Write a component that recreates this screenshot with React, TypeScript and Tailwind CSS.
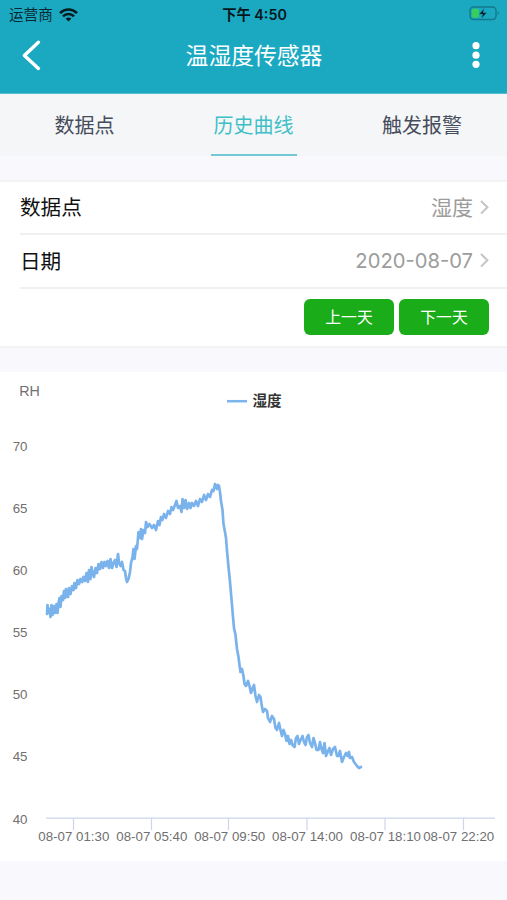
import type { ReactNode } from "react";

const CJK = "font-['Inter','Noto_Sans_CJK_SC',sans-serif]";

const yLabels = [
  { text: "70", y: 74 },
  { text: "65", y: 136 },
  { text: "60", y: 198 },
  { text: "55", y: 260 },
  { text: "50", y: 322 },
  { text: "45", y: 384 },
  { text: "40", y: 447 },
];

const xLabels = [
  { text: "08-07 01:30", x: 73.8 },
  { text: "08-07 05:40", x: 151.8 },
  { text: "08-07 09:50", x: 229.7 },
  { text: "08-07 14:00", x: 307.5 },
  { text: "08-07 18:10", x: 385.5 },
  { text: "08-07 22:20", x: 458.7 },
];

const ticks = [73.5, 151.5, 228.5, 307, 385, 463.5];

const humidity =
  "47,614 47.5,605 48.5,613 49.5,609 50.5,617 51.5,605 52.5,615 54,606 55,613 56.5,604 57.5,613 58.5,603 59.5,598 60.5,607 61.5,596 63,600 64,591 65,598 66,589 67,596 68,597 69,588 70.5,594 72,586 73.5,590 74.5,583 76,588 77.5,580 79,584 80.5,579 82,582 83.5,577 85,581 86.5,573 88,582 89,570 90.5,579 91.5,567 92.5,573 94,577 95.5,568 97,573 98.5,564 100,569 101.5,562 103,568 104.5,562 106,566 107.5,561 109,568 110.5,559 112,568 113.5,563 115,560 116.5,567 118,554 119,563 120.5,566 122,562 123.5,570 125,571 126,578 127,582 128.5,579 130,572 131,563 132.5,557 133.5,549 134.5,559 136,546 137,549 138.5,532 140,538 141,529 142,539 143.5,530 145,533 146,522 147.5,527 149.5,524 152,528 154,525 156,530 158,521 159.5,525 161,517 162.5,520 164,514 166,518 168,511 170,514 171.5,507 173,510 175,505 176.5,501 178,508 180,506 181.5,512 182.5,499 184,508 185.5,500 187,509 189,503 190.5,508 192,503 194,506 196,501 198,506 200,499 202,502 204,495 206,500 208,494 210,497 212,490 213.5,491 215,484 217,489 218,485 219,486 220,492 221,501 222.5,510 223.5,524 225,532 226,538 227,551 228.5,567 230,582 231.5,599 233,617 234,628 235.5,635 237,649 238.5,657 239.5,665 240.5,672 242,669 243.5,676 244.5,684 246,686 248,681 249.5,686 251,693 253,687 254,685 255.5,696 257,702 259,695 260.5,697 261.5,704 263,712 265,709 267,711 268,718 270,722 272,716 274,719 275.5,728 277,730 279,723 280.5,730 282,736 283.5,730 285,734 286.5,741 288,736 289.5,744 291,740 292.5,745 294.5,747 296,738 297.5,736 299,744 301,739 302.5,736 304,742 305.5,745 307,737 308.5,735 310,743 312,747 313.5,738 315,743 316.5,750 318.5,750 320,742 321.5,749 323,753 324.5,743 326,756 328,751 329.5,748 331,755 333,749 335,747 337,756 338.5,756 340,751 342,762 344,757 346,753 347.5,756 349,752 350,758 352,757 354,762 357,766 359,768 361,767";

function Chevron() {
  return (
    <svg className="h-[15px] w-[9px]" viewBox="0 0 9 15" fill="none" stroke="#c4c4c4" strokeWidth="2">
      <path d="M1 1 L7.4 7.3 L1 13.6" />
    </svg>
  );
}

function Row({ label, children }: { label: string; children: ReactNode }) {
  return (
    <div className="ml-5 flex h-[54px] items-center justify-between border-b-2 border-[#f1f1f2] pr-[18px]">
      <span className="pt-[3px] text-[20.6px] text-[#111]">{label}</span>
      <span className="flex items-center gap-[7px] text-[#9c9c9c]">
        {children}
        <Chevron />
      </span>
    </div>
  );
}

function Header() {
  return (
    <header className="h-[94px] border-b border-[#53bfce] bg-[#1ba9c2]">
      <div className="grid h-7 grid-cols-3 items-center pl-[9px] pr-[7px] text-[14.6px] leading-7 text-[#082930]">
        <div className="flex items-center gap-[6px]">
          <span className="pt-px">运营商</span>
          <svg className="h-[14px] w-[19px]" viewBox="0 0 19 14" fill="none" stroke="#061c21" strokeWidth="2.6">
            <path d="M1 5.1 C6 .2 13 .2 18 5.1" />
            <path d="M4 8.3 C7 5.2 12 5.2 15 8.3" />
            <path d="M6.6 10.6 Q9.5 8.2 12.4 10.6 L9.5 13.5 Z" fill="#061c21" stroke="none" />
          </svg>
        </div>
        <div className="whitespace-nowrap text-center text-[14.3px] font-semibold text-[#06181c]">下午 4:50</div>
        <div className="flex justify-end">
          <svg className="-mt-[2px] h-[15px] w-[31px]" viewBox="0 0 31 15" fill="none">
            <rect x="1" y="1" width="26" height="12.5" rx="3.5" stroke="#137a8c" strokeWidth="1.4" />
            <path d="M28.7 5 Q31 7.2 28.7 9.4 Z" fill="#137a8c" />
            <rect x="2.8" y="2.8" width="7.2" height="9" rx="1.8" fill="#35cf59" />
            <path d="M15.5 2 L9.8 8.2 H13.5 L12.2 12.8 L18 6.4 H14.2 Z" fill="#04191d" stroke="#1ba9c2" strokeWidth=".6" />
          </svg>
        </div>
      </div>
      <div className="flex h-[54px] items-center justify-between pl-[22px] pr-[27px]">
        <svg className="h-[31px] w-5" viewBox="0 0 20 31" fill="none" stroke="white" strokeWidth="3.4" strokeLinecap="round" strokeLinejoin="round">
          <path d="M16.4 2.2 L2.4 15.5 L16.4 28.4" />
        </svg>
        <h1 className="ml-[-6px] pt-[2px] text-[22.8px] text-white">温湿度传感器</h1>
        <svg className="h-[26px] w-2" viewBox="0 0 8 26" fill="white">
          <circle cx="4" cy="3.7" r="3.6" />
          <circle cx="4" cy="13.2" r="3.6" />
          <circle cx="4" cy="22.3" r="3.6" />
        </svg>
      </div>
    </header>
  );
}

export default function App() {
  return (
    <div className={`h-[900px] w-[507px] overflow-hidden bg-[#f9f8fd] ${CJK}`}>
      <Header />
      <nav className="grid h-[62px] grid-cols-3 bg-[#f4f6f8] text-[20px] text-[#464c5b]">
        <div className="flex items-center justify-center pt-[2px]">数据点</div>
        <div className="flex justify-center">
          <div className="flex w-[86px] items-center justify-center whitespace-nowrap border-b-2 border-[#74c7d5] pt-[4px] text-[#3fbfc8]">历史曲线</div>
        </div>
        <div className="flex items-center justify-center pr-px pt-[2px]">触发报警</div>
      </nav>
      <section className="mt-6 h-[168px] border-y-2 border-[#f2f2f5] bg-white">
        <div className="-mt-px">
          <Row label="数据点">
            <span className="pt-[2px] text-[21px]">湿度</span>
          </Row>
        </div>
        <Row label="日期">
          <span className="text-[20.2px]">2020-08-07</span>
        </Row>
        <div className="flex justify-end gap-[5px] pr-[18px] pt-[10px] text-[15.8px] text-white">
          <button className="h-9 w-[90px] rounded-[6px] bg-[#1aad19] pt-[2px]">上一天</button>
          <button className="h-9 w-[90px] rounded-[6px] bg-[#1aad19] pt-[2px]">下一天</button>
        </div>
      </section>
      <section className="mt-6 h-[489px] bg-white">
        <svg className="block h-[489px] w-[507px]" viewBox="0 0 507 489">
          <g className="font-['Liberation_Sans',sans-serif] text-[13.3px]" fill="#707070">
            <text x="19.3" y="24" className="text-[14.3px]">RH</text>
            {yLabels.map((l) => (
              <text key={l.text} x="12.7" y={l.y + 5}>{l.text}</text>
            ))}
            {xLabels.map((l) => (
              <text key={l.text} x={l.x} y="469" textAnchor="middle">{l.text}</text>
            ))}
          </g>
          <path d="M227 29.2 H247" stroke="#7cb5ec" strokeWidth="2.5" />
          <text x="252.5" y="34" fill="#333" className="text-[14.6px] font-bold">湿度</text>
          <path d="M46 446.2 H495" stroke="#ccd6eb" strokeWidth="1.3" />
          {ticks.map((x) => (
            <path key={x} d={`M${x} 446 V458`} stroke="#ccd6eb" strokeWidth="1.2" />
          ))}
          <polyline
            transform="translate(0 -372)"
            points={humidity}
            fill="none"
            stroke="#7ab3eb"
            strokeWidth="2.7"
            strokeLinejoin="round"
            strokeLinecap="round"
          />
        </svg>
      </section>
    </div>
  );
}
